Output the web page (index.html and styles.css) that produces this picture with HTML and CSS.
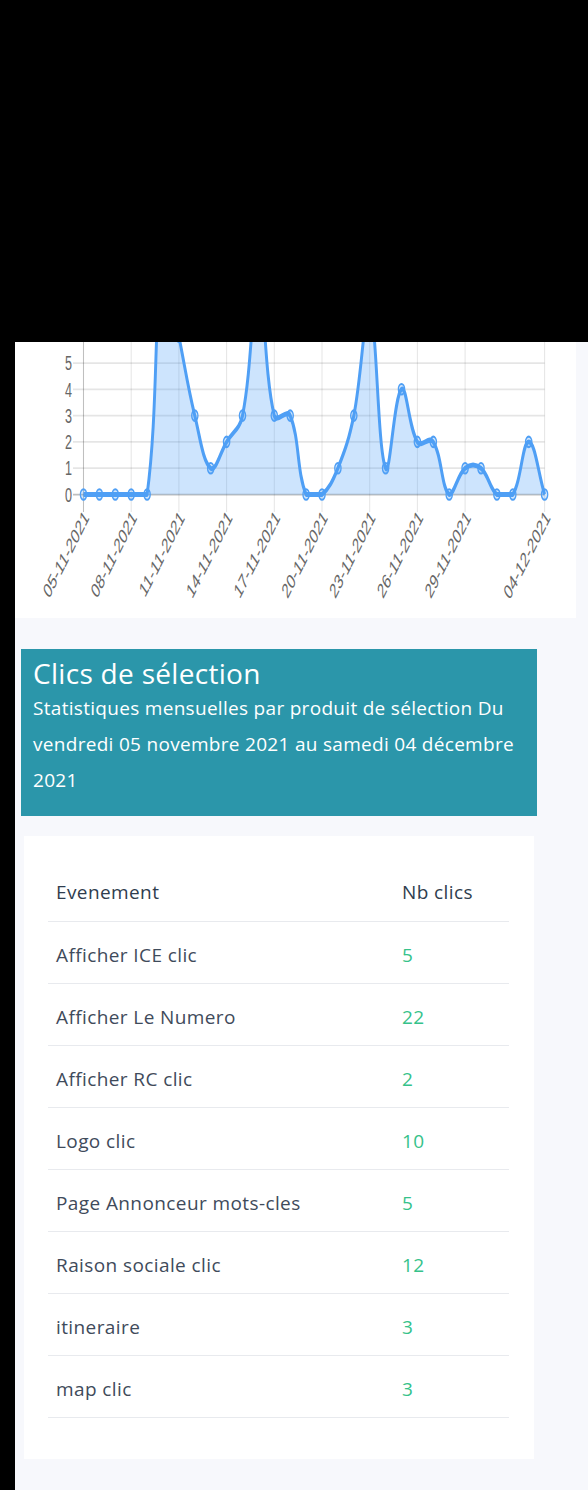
FILE: index.html
```html
<!DOCTYPE html>
<html lang="fr">
<head>
<meta charset="utf-8">
<title>Clics de sélection</title>
<link rel="stylesheet" href="styles.css">
</head>
<body>
<div class="page">
  <section class="chart-card">
    <svg class="chart" id="chart" width="561" height="276" viewBox="15 342 561 276" xmlns="http://www.w3.org/2000/svg"></svg>
  </section>

  <header class="heading">
    <h2 class="heading-title">Clics de sélection</h2>
    <p class="heading-sub">Statistiques mensuelles par produit de sélection Du vendredi 05 novembre 2021 au samedi 04 décembre 2021</p>
  </header>

  <section class="table-card">
    <table class="stats">
      <thead>
        <tr><th class="col-event">Evenement</th><th>Nb clics</th></tr>
      </thead>
      <tbody>
        <tr><td>Afficher ICE clic</td><td class="count">5</td></tr>
        <tr><td>Afficher Le Numero</td><td class="count">22</td></tr>
        <tr><td>Afficher RC clic</td><td class="count">2</td></tr>
        <tr><td>Logo clic</td><td class="count">10</td></tr>
        <tr><td>Page Annonceur mots-cles</td><td class="count">5</td></tr>
        <tr><td>Raison sociale clic</td><td class="count">12</td></tr>
        <tr><td>itineraire</td><td class="count">3</td></tr>
        <tr><td>map clic</td><td class="count">3</td></tr>
      </tbody>
    </table>
  </section>
</div>
<script src="chart.js"></script>
</body>
</html>
```

FILE: styles.css
```css
* { box-sizing: border-box; }

body {
  margin: 0;
  background: #000;
  font-family: "Open Sans", "Noto Sans", sans-serif;
}

.page {
  margin: 342px 0 0 15px;
  background: #f7f8fc;
  padding-bottom: 31px;
}

.chart-card {
  width: 561px;
  height: 276px;
  background: #fff;
}

.chart { display: block; }

.chart .grid { stroke: rgba(0, 0, 0, 0.1); stroke-width: 1; }
.chart .axis { stroke: rgba(0, 0, 0, 0.25); stroke-width: 1; }
.chart .area { fill: rgba(77, 158, 247, 0.28); stroke: none; }
.chart .line { fill: none; stroke: #4f9ff5; stroke-width: 2.8; stroke-linejoin: round; }
.chart .pt { fill: rgba(77, 158, 247, 0.25); stroke: #4f9ff5; stroke-width: 1.2; }
.chart .tick-label {
  font-family: "Liberation Sans", Arial, sans-serif;
  font-size: 12px;
  fill: #666;
}

.heading {
  margin: 31px 0 0 6px;
  width: 516px;
  height: 167px;
  background: #2b96aa;
  color: #fff;
  padding: 7px 4px 0 12px;
}

.heading-title {
  margin: 0;
  font-size: 28px;
  font-weight: 400;
  line-height: 34px;
  letter-spacing: 0.3px;
}

.heading-sub {
  margin: 0;
  font-size: 19px;
  line-height: 36px;
  letter-spacing: 0.3px;
}

.table-card {
  margin: 20px 0 0 9px;
  width: 510px;
  height: 623px;
  background: #fff;
  padding: 23px 25px 0 24px;
}

.stats {
  width: 100%;
  border-collapse: collapse;
  font-size: 19px;
  letter-spacing: 0.4px;
}

.stats th,
.stats td {
  text-align: left;
  height: 62px;
  padding: 5px 8px 0;
  border-bottom: 1px solid #e8eaee;
  vertical-align: middle;
}

.stats th { font-weight: 500; color: #2f3d4e; }
.stats td { color: #3f4b5b; }
.stats .col-event { width: 346px; }
.stats .count { color: #36c28a; }
```

FILE: chart.js
```js
(function () {
  var NS = 'http://www.w3.org/2000/svg';
  var svg = document.getElementById('chart');
  var SX = 1.05, SY = 1.75;

  var labels = ['05-11-2021','06-11-2021','07-11-2021','08-11-2021','09-11-2021','10-11-2021','11-11-2021','12-11-2021','13-11-2021','14-11-2021','15-11-2021','16-11-2021','17-11-2021','18-11-2021','19-11-2021','20-11-2021','21-11-2021','22-11-2021','23-11-2021','24-11-2021','25-11-2021','26-11-2021','27-11-2021','28-11-2021','29-11-2021','30-11-2021','01-12-2021','02-12-2021','03-12-2021','04-12-2021'];
  var values = [0,0,0,0,0,9,6,3,1,2,3,8,3,3,0,0,1,3,7,1,4,2,2,0,1,1,0,0,2,0];

  var X0 = 83.5, STEP = 15.9, Y0 = 494.5, UNIT = 26.3;

  function px(i) { return (X0 + i * STEP) / SX; }
  function py(v) { return (Y0 - v * UNIT) / SY; }

  var g = document.createElementNS(NS, 'g');
  g.setAttribute('transform', 'scale(' + SX + ' ' + SY + ')');
  svg.appendChild(g);

  function el(name, attrs) {
    var e = document.createElementNS(NS, name);
    for (var k in attrs) e.setAttribute(k, attrs[k]);
    g.appendChild(e);
    return e;
  }

  var left = px(0), right = px(values.length - 1);
  var bottom = py(0), top = py(10);
  var tickLeft = left - 10, tickBottom = bottom + 10;

  // horizontal grid lines
  for (var v = 0; v <= 10; v++) {
    el('line', { x1: tickLeft, x2: right, y1: py(v), y2: py(v), 'class': v === 0 ? 'axis' : 'grid' });
  }
  // y labels (only the ones inside the visible part of the card)
  for (var w = 0; w <= 5; w++) {
    var t = el('text', { x: 72 / SX, y: py(w), 'text-anchor': 'end', 'dominant-baseline': 'central', 'class': 'tick-label' });
    t.textContent = String(w);
  }

  // vertical grid lines + x labels
  var shown = [0, 3, 6, 9, 12, 15, 18, 21, 24, 29];
  shown.forEach(function (i) {
    el('line', { x1: px(i), x2: px(i), y1: top, y2: tickBottom, 'class': i === 0 ? 'axis' : 'grid' });
    var lx = px(i) + 3 / SX, ly = tickBottom + 1;
    var t = el('text', {
      transform: 'translate(' + lx + ' ' + ly + ') rotate(-50)',
      'text-anchor': 'end',
      'dominant-baseline': 'central',
      'class': 'tick-label'
    });
    t.textContent = labels[i];
  });

  // bezier control points (Chart.js style spline, tension 0.4)
  var pts = values.map(function (val, i) { return { x: px(i), y: py(val) }; });
  function cap(p) {
    p.x = Math.max(left, Math.min(right, p.x));
    p.y = Math.max(top, Math.min(bottom, p.y));
    return p;
  }
  var ctrl = pts.map(function (p, i) {
    var p0 = pts[i - 1] || p, p2 = pts[i + 1] || p;
    var d01 = Math.hypot(p.x - p0.x, p.y - p0.y);
    var d12 = Math.hypot(p2.x - p.x, p2.y - p.y);
    var s01 = d01 / (d01 + d12), s12 = d12 / (d01 + d12);
    if (isNaN(s01)) s01 = 0;
    if (isNaN(s12)) s12 = 0;
    var fa = 0.4 * s01, fb = 0.4 * s12;
    return {
      prev: cap({ x: p.x - fa * (p2.x - p0.x), y: p.y - fa * (p2.y - p0.y) }),
      next: cap({ x: p.x + fb * (p2.x - p0.x), y: p.y + fb * (p2.y - p0.y) })
    };
  });

  var d = 'M' + pts[0].x + ' ' + pts[0].y;
  for (var i = 1; i < pts.length; i++) {
    var a = ctrl[i - 1].next, b = ctrl[i].prev;
    d += ' C' + a.x + ' ' + a.y + ' ' + b.x + ' ' + b.y + ' ' + pts[i].x + ' ' + pts[i].y;
  }

  el('path', { d: d + ' L' + right + ' ' + bottom + ' L' + left + ' ' + bottom + ' Z', 'class': 'area' });
  el('path', { d: d, 'class': 'line' });

  pts.forEach(function (p) {
    el('circle', { cx: p.x, cy: p.y, r: 3, 'class': 'pt' });
  });
})();
```
